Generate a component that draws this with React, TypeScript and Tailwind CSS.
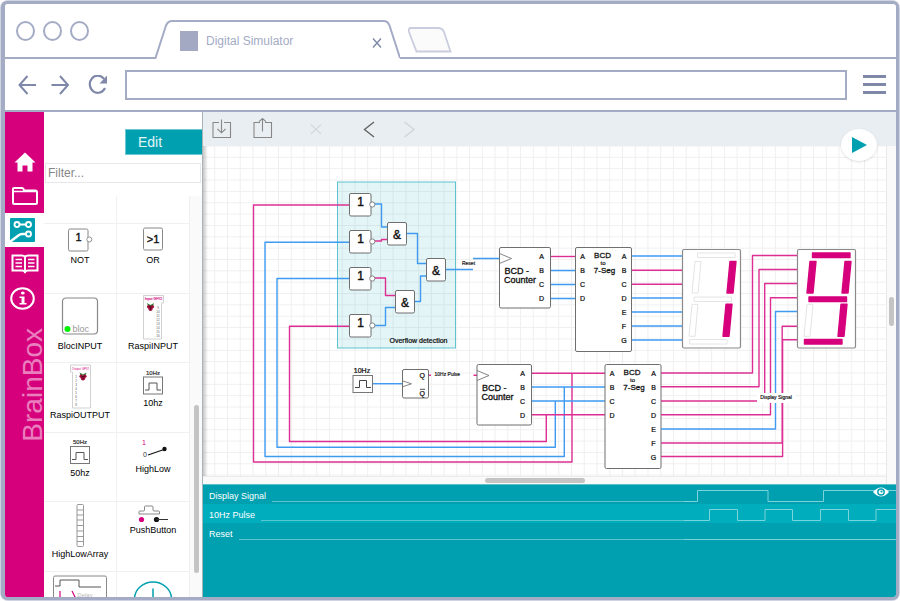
import React from "react";

const PINK = "#d6007d";
const WIRE_PINK = "#dd2f93";
const WIRE_BLUE = "#3f9bf2";
const FONT = '"Liberation Sans", Arial, sans-serif';

type TextProps = {
  x: number;
  y: number;
  size: number;
  anchor?: "start" | "middle";
  bold?: boolean;
  fill?: string;
  children: React.ReactNode;
};

function Label({ x, y, size, anchor = "middle", bold = false, fill = "#111", children }: TextProps) {
  return (
    <text
      x={x}
      y={y + size * 0.36}
      fontSize={size}
      fontFamily={FONT}
      textAnchor={anchor}
      fill={fill}
      stroke={bold ? fill : "none"}
      strokeWidth={bold ? size * 0.035 : 0}
    >
      {children}
    </text>
  );
}

function Box({ x, y, w, h }: { x: number; y: number; w: number; h: number }) {
  return <rect x={x} y={y} width={w} height={h} rx={1.5} fill="#fff" stroke="#6f6f6f" />;
}

const PINS = ["A", "B", "C", "D", "E", "F", "G"];

function Wire({ d, on = false }: { d: string; on?: boolean }) {
  return <path d={d} fill="none" stroke={on ? WIRE_PINK : WIRE_BLUE} strokeWidth={1.4} strokeLinejoin="round" />;
}

function NotGate({ y }: { y: number }) {
  return (
    <g>
      <Box x={349.5} y={y} w={21.5} h={22.5} />
      <circle cx={372.3} cy={y + 11} r={2.6} fill="#fff" stroke="#777" strokeWidth={0.9} />
      <Label x={360.5} y={y + 8.5} size={12} bold>1</Label>
    </g>
  );
}

function AndGate({ x, y }: { x: number; y: number }) {
  return (
    <g>
      <Box x={x} y={y} w={19} h={22.5} />
      <Label x={x + 9.5} y={y + 12} size={12} bold>&amp;</Label>
    </g>
  );
}

function Counter({ x, y, w }: { x: number; y: number; w: number }) {
  return (
    <g>
      <Box x={x} y={y} w={w} h={60.5} />
      <path d={`M${x} ${y + 6}l12 5-12 5`} fill="none" stroke="#777" strokeWidth={0.9} />
      <Label x={x + 5} y={y + 23} size={9} anchor="start" bold>BCD -</Label>
      <Label x={x + 4.5} y={y + 32} size={9} anchor="start" bold>Counter</Label>
      {PINS.slice(0, 4).map((p, i) => (
        <Label key={p} x={x + w - 9} y={y + 9 + i * 14} size={7} bold>{p}</Label>
      ))}
    </g>
  );
}

function Decoder({ x, y }: { x: number; y: number }) {
  return (
    <g>
      <Box x={x} y={y} w={56} h={104} />
      <Label x={x + 27} y={y + 7.5} size={8} bold>BCD</Label>
      <Label x={x + 27.5} y={y + 15} size={6} bold>to</Label>
      <Label x={x + 29} y={y + 22.5} size={8} bold>7-Seg</Label>
      {PINS.slice(0, 4).map((p, i) => (
        <Label key={p} x={x + 7} y={y + 9 + i * 14} size={7} bold>{p}</Label>
      ))}
      {PINS.map((p, i) => (
        <Label key={p} x={x + 48.5} y={y + 9 + i * 14} size={7} bold>{p}</Label>
      ))}
    </g>
  );
}

const SEGMENTS: Record<string, string> = {
  top: "M15 3.500h37.500v4.500h-37.500z",
  upperLeft: "M12.500 12h6l-3 31.500h-6z",
  upperRight: "M47.500 12h6l-3 31.500h-6z",
  middle: "M11.500 47.500h37.500v4.500h-37.500z",
  lowerLeft: "M9.500 54.800h6l-3 32h-6z",
  lowerRight: "M43.500 54.800h6l-3 32h-6z",
  bottom: "M7 90h37.500v4.500h-37.500z",
};

function Display({ x, lit }: { x: number; lit: string[] }) {
  return (
    <g transform={`translate(${x} 249.5)`}>
      <rect width={58} height={98.5} rx={1.5} fill="#fff" stroke="#8a8a8a" strokeWidth={1.2} />
      {Object.keys(SEGMENTS).map((name) => {
        const on = lit.includes(name);
        return (
          <path
            key={name}
            d={SEGMENTS[name]}
            fill={on ? PINK : "#fff"}
            stroke={on ? PINK : "#e4e4e4"}
            strokeWidth={on ? 1.4 : 1}
            strokeLinejoin="round"
          />
        );
      })}
    </g>
  );
}

function Circuit() {
  return (
    <svg className="block h-full w-full" role="img" aria-label="Circuit diagram">
      <defs>
        <pattern id="grid" x={11.3} y={-0.5} width={12.74} height={11.35} patternUnits="userSpaceOnUse">
          <path d="M.5 0V11.35M0 .5H12.74" stroke="#efefef" strokeWidth={1} fill="none" />
        </pattern>
        <linearGradient id="edge">
          <stop offset="0" stopColor="#000" stopOpacity={0.22} />
          <stop offset="1" stopColor="#000" stopOpacity={0} />
        </linearGradient>
      </defs>
      <rect width="100%" height="100%" fill="url(#grid)" />
      <rect width={5} height="100%" fill="url(#edge)" />
      <g transform="translate(-203 -146)">
        <rect x={337.5} y={182} width={118} height={166} fill="#00a0b0" fillOpacity={0.11} stroke="#5dc3cc" />
        <Label x={418.5} y={340} size={7} bold>Overflow detection</Label>

        <Wire on d="M349 205H253.500V462H572V373" />
        <Wire d="M349 242.300H265V456.500H564.300V387" />
        <Wire d="M349 278.500H277V447.300H555.300V401" />
        <Wire on d="M349 326.300H289.500V441.500H546.300V415" />
        <Wire d="M374.500 204H381.500V227H387.500" />
        <Wire on d="M374.500 241H381.500V239.500H387.500" />
        <Wire on d="M374.500 278H385.500V295.500H395" />
        <Wire d="M374.500 325.500H385.500V307.500H395" />
        <Wire d="M407 233.500H417.500V263.500H427" />
        <Wire d="M415 301.500H420.500V276H427" />
        <Wire d="M446 269.500H473M473 258.500H500" />
        <Label x={468.5} y={263} size={5} bold>Reset</Label>

        <NotGate y={193.5} />
        <NotGate y={230.5} />
        <NotGate y={267.5} />
        <NotGate y={314.5} />
        <AndGate x={387.5} y={222.5} />
        <AndGate x={426.5} y={258.5} />
        <AndGate x={395.5} y={290.5} />

        <Wire on d="M550 256.500H576" />
        <Wire d="M550 270.500H576M550 284.500H576M550 298.500H576" />
        <Wire on d="M631 270.300H683M631 284.300H683" />
        <Wire d="M631 256H683M631 298H683M631 312H683M631 326H683M631 340H683" />
        <Counter x={499.5} y={247.5} w={51} />
        <Decoder x={575.5} y={247.5} />
        <Display x={682.5} lit={["upperRight", "lowerRight"]} />

        <Label x={362} y={370.5} size={7} bold>10Hz</Label>
        <Wire d="M372 383.700H403" />
        <rect x={353} y={375.5} width={19.5} height={17} fill="#fff" stroke="#777" />
        <path d="M355 387.500H359.500V380.500H366.500V387.500H371" fill="none" stroke="#444" />
        <Box x={402.5} y={369.5} w={26} h={28.5} />
        <path d="M403 381l8.500 2.800-8.500 2.800" fill="none" stroke="#777" strokeWidth={0.9} />
        <Label x={422.3} y={375.5} size={7} bold>Q</Label>
        <Label x={422.3} y={393} size={7} bold>Q</Label>
        <path d="M420 389.300h5" stroke="#222" strokeWidth={0.8} />
        <Wire on d="M429 375.300h2M473.500 375.300h4" />
        <Label x={447.3} y={374} size={5} bold>10Hz Pulse</Label>

        <Wire on d="M531 373.300H605M531 414.800H605" />
        <Wire d="M531 387H605M531 401H605" />
        <Counter x={477} y={364.5} w={54.5} />
        <Decoder x={605} y={364.5} />

        <Wire on d="M661 373H752.500V255.500H798" />
        <Wire on d="M661 386.700H759V269.500H798" />
        <Wire on d="M661 401H764.700V283.500H798" />
        <Wire on d="M661 414.800H770.500V297.700H798" />
        <Wire d="M661 429H775.500V311.500H798" />
        <Wire on d="M661 443H782.200V326.300H798" />
        <Wire on d="M661 456.500H782.600V339.700H798" />
        <rect x={757} y={393} width={38} height={10} fill="#fff" />
        <Label x={776} y={397.3} size={5} bold>Display Signal</Label>
        <Display x={797.5} lit={["top", "upperLeft", "upperRight", "middle", "lowerRight", "bottom"]} />
      </g>
    </svg>
  );
}

function Raspberry({ x, y }: { x: number; y: number }) {
  return (
    <g transform={`translate(${x} ${y})`}>
      <path d="M-3.500-4l3.500 2 3.500-2-1 3h-5z" fill="#2f7d32" />
      <circle cx={-1.8} cy={-0.2} r={1.8} fill="#a3123f" />
      <circle cx={1.8} cy={-0.2} r={1.8} fill="#a3123f" />
      <circle cx={0} cy={1.8} r={2.2} fill="#a3123f" />
      <path d="M-2 0h4M0-1v4" stroke="#3c0618" strokeWidth={0.6} />
    </g>
  );
}

function Clock({ text, y }: { text: string; y: number }) {
  return (
    <g>
      <Label x={36} y={y} size={6} bold fill="#333">{text}</Label>
      <rect x={26.5} y={y + 4.5} width={19} height={17} fill="#fff" stroke="#777" />
      <path d={`M28 ${y + 17.5}h4v-7h8v7h4`} fill="none" stroke="#555" />
    </g>
  );
}

type Part = { name: string; art: React.ReactNode; size: string };

const PARTS: Part[] = [
  {
    name: "NOT",
    size: "h-7",
    art: (
      <>
        <rect x={24.5} y={5} width={19.5} height={22} rx={1.5} fill="#fff" stroke="#888" />
        <circle cx={45.3} cy={15.5} r={2.5} fill="#fff" stroke="#888" strokeWidth={0.9} />
        <Label x={34.5} y={13} size={11} bold>1</Label>
      </>
    ),
  },
  {
    name: "OR",
    size: "h-7",
    art: (
      <>
        <rect x={26.5} y={4} width={19} height={22} rx={1.5} fill="#fff" stroke="#888" />
        <Label x={36} y={15} size={11} bold>&gt;1</Label>
      </>
    ),
  },
  {
    name: "BlocINPUT",
    size: "h-11",
    art: (
      <>
        <rect x={18.5} y={4} width={35} height={36} rx={3.5} fill="#fff" stroke="#888" strokeWidth={1.2} />
        <circle cx={23.5} cy={35} r={3} fill="#00f000" />
        <Label x={28.5} y={35} size={9} anchor="start" fill="#999">bloc</Label>
      </>
    ),
  },
  {
    name: "RaspiINPUT",
    size: "h-11",
    art: (
      <>
        <path d="M26.500 1.500h20v7.500h-2v36h-18z" fill="#fff" stroke="#ccc" strokeWidth={0.9} />
        <Label x={36.5} y={5} size={3.5} bold fill={PINK}>Input GPIO</Label>
        <Raspberry x={33.5} y={13} />
        {["9", "10", "11", "12", "13", "14", "15", "16"].map((n, i) => (
          <Label key={n} x={41} y={13.5 + i * 4} size={3} fill="#555">{n}</Label>
        ))}
      </>
    ),
  },
  {
    name: "RaspiOUTPUT",
    size: "h-11",
    art: (
      <>
        <path d="M26.500 2h20v43h-18v-36h-2z" fill="#fff" stroke="#ccc" strokeWidth={0.9} />
        <Label x={36.5} y={5.5} size={3} fill={PINK}>Output GPIO</Label>
        <Raspberry x={39} y={13.5} />
        {["1", "2", "3", "4", "5", "6", "7", "8"].map((n, i) => (
          <Label key={n} x={32} y={14 + i * 4} size={3} fill="#555">{n}</Label>
        ))}
      </>
    ),
  },
  { name: "10hz", size: "h-8", art: <Clock text="10Hz" y={9.5} /> },
  { name: "50hz", size: "h-8", art: <Clock text="50Hz" y={9} /> },
  {
    name: "HighLow",
    size: "h-7",
    art: (
      <>
        <Label x={27} y={9.5} size={7} fill={PINK}>1</Label>
        <Label x={28} y={21} size={7} fill="#333">0</Label>
        <path d="M31 22l16-5.500" stroke="#111" strokeWidth={1.2} />
        <circle cx={47.5} cy={16} r={2.2} fill="#111" />
      </>
    ),
  },
  {
    name: "HighLowArray",
    size: "h-11",
    art: (
      <>
        <rect x={33} y={2.5} width={6.5} height={42} rx={1} fill="#fff" stroke="#999" />
        <path d="M33 8h6.500M33 13h6.500M33 18h6.500M33 23.500h6.500M33 29h6.500M33 34.500h6.500M33 39.500h6.500" stroke="#999" />
      </>
    ),
  },
  {
    name: "PushButton",
    size: "h-5",
    art: (
      <>
        <path d="M22 12v-2q0-1 1-1h3.500q1 0 1-1v-3q0-1 1-1h6.500q1 0 1 1v3q0 1 1 1h4.500q1 0 1 1v2z" fill="#fff" stroke="#888" />
        <circle cx={24.5} cy={17.5} r={2.6} fill={PINK} />
        <circle cx={39.5} cy={17.5} r={2.6} fill="#111" />
        <path d="M39 17.500h12" stroke="#333" />
      </>
    ),
  },
  {
    name: "",
    size: "h-11",
    art: (
      <>
        <rect x={9.5} y={4} width={53} height={36} rx={1.5} fill="#fff" stroke="#888" />
        <path d="M11 14h5v-6h19v7h22" fill="none" stroke="#555" />
        <path d="M16 19v9M28 19l4 8" stroke={PINK} strokeWidth={1.2} />
        <Label x={41} y={23} size={6} fill="#bbb">Delay</Label>
      </>
    ),
  },
  {
    name: "",
    size: "h-11",
    art: (
      <>
        <ellipse cx={36} cy={27} rx={18.5} ry={17} fill="#fff" stroke="#00a0b0" strokeWidth={1.5} />
        <path d="M36 16.500v22M26 27h20" stroke="#00a0b0" strokeWidth={1.5} />
      </>
    ),
  },
];

const HIDDEN_NAMES = ["Delay", "Add component"];

function Palette() {
  return (
    <section className="flex w-[158px] shrink-0 flex-col bg-white">
      <div className="flex justify-end pt-[17px]">
        <button type="button" className="h-[26px] w-[77px] border border-[#6cc8d1] border-r-0 bg-[#00a0b0] pl-3 text-left text-sm leading-6 text-[#e2f6f8]">
          Edit
        </button>
      </div>
      <div className="pt-2 pr-px pl-px">
        <input
          type="text"
          aria-label="Filter components"
          placeholder="Filter..."
          className="block h-5 w-full border border-[#e8e8e8] pl-0.5 text-xs text-gray-700 outline-none placeholder:text-[#888]"
        />
      </div>
      <div className="mt-[13px] flex min-h-0 flex-1">
        <div className="grid flex-1 grid-cols-2 grid-rows-[28px_70px_69px_70px_69px_70px_69px] overflow-hidden">
          <div className="border-r border-b border-[#f0f0f0]" />
          <div className="border-r border-b border-[#f0f0f0]" />
          {PARTS.map((part, i) => (
            <button
              key={i}
              type="button"
              aria-label={part.name || HIDDEN_NAMES[i - 10]}
              className="flex flex-col items-center overflow-hidden border-r border-b border-[#f0f0f0] text-[9px] leading-4 text-black"
            >
              <svg className={`w-[72px] shrink-0 overflow-visible ${part.size}`}>{part.art}</svg>
              {part.name}
            </button>
          ))}
        </div>
        <div className="w-3 bg-[#fafafa] pt-[209px] pl-1">
          <div className="h-[168px] w-[5px] rounded-full bg-[#c4c4c4]" />
        </div>
      </div>
    </section>
  );
}

function Sidebar() {
  const item = "flex h-[34px] w-full shrink-0 items-center justify-center";
  return (
    <nav className="flex w-[39px] shrink-0 flex-col overflow-hidden bg-[#d6007d] pt-[33px]">
      <button type="button" aria-label="Home" className={item}>
        <svg width="22" height="20" viewBox="0 0 22 20" fill="#fff">
          <path d="M11 0.500L21.500 10.500H18.500V19.500H13.500V13.500H8.500V19.500H3.500V10.500H.500z" />
        </svg>
      </button>
      <button type="button" aria-label="Open" className={item}>
        <svg width="26" height="18" viewBox="0 0 26 18" fill="none" stroke="#fff" strokeWidth="2" strokeLinejoin="round">
          <path d="M1 4V2q0-1 1-1h8q1 0 1.500 1l.500 1.500h11q2 0 2 1.500v11q0 1-1 1H2q-1 0-1-1z" />
          <path d="M1 4.500h23" strokeWidth="1.500" />
        </svg>
      </button>
      <button type="button" aria-label="Simulator" className="flex h-[34px] w-full shrink-0 items-center bg-white pl-[5px]">
        <svg width="25" height="24" viewBox="0 0 25 24">
          <rect width="25" height="24" rx="1" fill="#00a0b0" />
          <g fill="none" stroke="#fff" strokeWidth="1.900">
            <circle cx="7" cy="6.500" r="2.500" />
            <circle cx="18.500" cy="6.500" r="2.500" />
            <path d="M9.500 6.500h6.500" />
            <circle cx="18.500" cy="16" r="2.500" />
            <path d="M16 16h-3.500q-2.500 0-4.500 1.800l-8 6" strokeWidth="2.500" />
          </g>
        </svg>
      </button>
      <button type="button" aria-label="Manual" className={item}>
        <svg width="28" height="20" viewBox="0 0 28 20" fill="none" stroke="#fff" strokeWidth="2">
          <path d="M14 3q-1-1.500-3-1.500H1.500v15H11q2 0 3 1.500 1-1.500 3-1.500h9.500v-15H17q-2 0-3 1.500zM14 3v16" />
          <path d="M4.500 5.500h6.500M4.500 9h6.500M4.500 12.500h6.500M17 5.500h6.500M17 9h6.500M17 12.500h6.500" strokeWidth="1.700" />
        </svg>
      </button>
      <button type="button" aria-label="About" className="flex h-[34px] w-full shrink-0 items-center pl-[5px]">
        <svg width="25" height="23" viewBox="0 0 25 23">
          <ellipse cx="12.500" cy="11.500" rx="11.300" ry="10.200" fill="none" stroke="#fff" strokeWidth="2" />
          <ellipse cx="12.800" cy="6" rx="1.900" ry="1.600" fill="#fff" />
          <path d="M9.500 9.500h5v6.500h2v1.500h-7V16h2v-5h-2z" fill="#fff" />
        </svg>
      </button>
      <span className="mt-[13px] rotate-180 self-end text-[28px] leading-[22px] text-white/50 [writing-mode:vertical-rl]">
        BrainBox
      </span>
    </nav>
  );
}

function Toolbar() {
  return (
    <div className="flex h-[34px] shrink-0 items-center bg-[#e9eef2] pl-[9px] text-[#888]">
      <button type="button" aria-label="Download">
        <svg width="20" height="22" viewBox="0 0 20 22" fill="none" stroke="currentColor" strokeWidth="1.100">
          <path d="M7 4.500H1v15h17.500v-15H12M9.500 1.500v13M5.500 11l4 3.800 4-3.800" />
        </svg>
      </button>
      <button type="button" aria-label="Share" className="ml-[21px]">
        <svg width="20" height="22" viewBox="0 0 20 22" fill="none" stroke="currentColor" strokeWidth="1.100">
          <path d="M7 4.500H1v15h17.500v-15H12M9.500 13.500V0.500M6 3.700l3.500-3.200L13 3.700" />
        </svg>
      </button>
      <button type="button" aria-label="Delete" className="ml-[37px] text-[#d3d8dc]">
        <svg width="12" height="12" viewBox="0 0 12 12" fill="none" stroke="currentColor" strokeWidth="1.100">
          <path d="M.800 1.500L11 11M11 1.500L.800 11" />
        </svg>
      </button>
      <button type="button" aria-label="Undo" className="ml-[41px] text-[#666]">
        <svg width="12" height="17" viewBox="0 0 12 17" fill="none" stroke="currentColor" strokeWidth="1.400">
          <path d="M11 1L1.500 8.500 11 16" />
        </svg>
      </button>
      <button type="button" aria-label="Redo" className="ml-7 text-[#cfd4d8]">
        <svg width="13" height="17" viewBox="0 0 13 17" fill="none" stroke="currentColor" strokeWidth="1.400">
          <path d="M1.500 1L11 8.500 1.500 16" />
        </svg>
      </button>
    </div>
  );
}

const SIGNALS = [
  { name: "Display Signal", wave: "M0 16.500H13.500V5.500H84V16.500H139.500V5.500H212", row: "" },
  {
    name: "10Hz Pulse",
    wave: "M0 16.500H25.500V5.500H53.500V16.500H81V5.500H108.500V16.500H136.500V5.500H164.500V16.500H192V5.500H212",
    row: "bg-[#00adbd]",
  },
  { name: "Reset", wave: "M0 16.500H212", row: "" },
];

function Timeline() {
  return (
    <section className="relative h-[113px] shrink-0 border-t border-[#5cc0ca] bg-[#00a0b0]">
      {SIGNALS.map((signal) => (
        <div key={signal.name} className={`flex h-[19px] pl-1.5 text-[9px] leading-[22px] text-white ${signal.row}`}>
          <span className="mr-1.5">{signal.name}</span>
          <div className="mb-0.5 flex-1 border-b border-[#5cc4ce]" />
          <svg width="212" height="19" fill="none" stroke="#7bd3db">
            <path d={signal.wave} />
          </svg>
        </div>
      ))}
      <button type="button" aria-label="Toggle signals" className="absolute top-[2px] right-[7px]">
        <svg width="16" height="10" viewBox="0 0 16 10" className="block">
          <path d="M0 5Q8-4 16 5 8 14 0 5z" fill="#fff" />
          <ellipse cx="8" cy="5" rx="3.200" ry="3" fill="none" stroke="#00a0b0" strokeWidth="1.400" />
          <circle cx="8.500" cy="4.500" r="1.100" fill="#00a0b0" />
        </svg>
      </button>
    </section>
  );
}

function TabStrip() {
  return (
    <header className="flex h-[55px] shrink-0">
      <div className="flex w-[150px] gap-2 border-b-2 border-[#a4abc5] pt-[17px] pl-[11px]">
        {["Close", "Minimize", "Zoom"].map((name) => (
          <button
            key={name}
            type="button"
            aria-label={`${name} window`}
            className="h-5 w-[19px] rounded-[50%] border-2 border-[#a4abc5]"
          />
        ))}
      </div>
      <div className="relative w-[245px]">
        <svg width="245" height="55" viewBox="0 0 245 55" className="absolute inset-0" fill="none" stroke="#a4abc5" strokeWidth="2">
          <path d="M-1 54H.500L11 21.500Q13 17 17 17H228.500Q233 17 234.500 21.500L245 54" />
        </svg>
        <div className="relative flex h-full items-center pt-[18px] pl-[25px] text-xs text-[#a4abc5]">
          <span className="mr-2 h-5 w-[18px] bg-[#a3a8c3]" />
          <span>Digital Simulator</span>
          <button type="button" aria-label="Close tab" className="mt-1 mr-[18px] ml-auto">
            <svg width="10" height="10" viewBox="0 0 10 10" stroke="#7f88a8" strokeWidth="1.400">
              <path d="M1 .500l8 9M9 .500l-8 9" />
            </svg>
          </button>
        </div>
      </div>
      <div className="flex-1 border-b-2 border-[#a4abc5] pt-[23px] pl-[7px]">
        <button type="button" aria-label="New tab" className="block">
          <svg width="46" height="26" viewBox="0 0 46 26" fill="#fbfbfc" stroke="#c9cddd" strokeWidth="1.800">
            <path d="M4 1H31Q35.500 1 37 5L43.500 24.500H9.500L2 5Q1 1 4 1z" />
          </svg>
        </button>
      </div>
    </header>
  );
}

function AddressBar() {
  return (
    <div className="flex h-[53px] shrink-0 items-center border-b-2 border-[#a4abc5] pr-2.5 pl-3 text-[#7f88a8]">
      <button type="button" aria-label="Back">
        <svg width="20" height="20" viewBox="0 0 20 20" fill="none" stroke="currentColor" strokeWidth="2">
          <path d="M19 10H2.500M10.500 1l-8 9 8 9" />
        </svg>
      </button>
      <button type="button" aria-label="Forward" className="ml-3.5">
        <svg width="20" height="20" viewBox="0 0 20 20" fill="none" stroke="currentColor" strokeWidth="2">
          <path d="M.500 10H17M9 1l8 9-8 9" />
        </svg>
      </button>
      <button type="button" aria-label="Reload" className="ml-[17px]">
        <svg width="20" height="20" viewBox="0 0 20 20" fill="none" stroke="currentColor" strokeWidth="2.200">
          <path d="M16 3.800A8 8.600 0 1 0 17 13" />
          <path d="M19 .500V8.500H11.500z" fill="currentColor" stroke="none" />
        </svg>
      </button>
      <input
        type="text"
        aria-label="Address"
        className="ml-[17px] h-[30px] min-w-0 flex-1 border-2 border-[#a4abc5] px-2 text-xs outline-none"
      />
      <button type="button" aria-label="Menu" className="ml-4 flex flex-col gap-[5px]">
        <span className="h-[3px] w-[23px] bg-[#7f88a8]" />
        <span className="h-[3px] w-[23px] bg-[#7f88a8]" />
        <span className="h-[3px] w-[23px] bg-[#7f88a8]" />
      </button>
    </div>
  );
}

export default function App() {
  return (
    <div className={'h-screen rounded-lg bg-[#d0d3e1] p-px font-["Liberation_Sans",Arial,sans-serif]'}>
      <div className="flex h-full flex-col overflow-hidden rounded-md border-[3px] border-l-4 border-[#a4abc5] bg-white">
        <TabStrip />
        <AddressBar />
        <div className="flex min-h-0 flex-1">
          <Sidebar />
          <Palette />
          <main className="relative flex min-w-0 flex-1 flex-col border-l border-[#a9b4b8]">
            <Toolbar />
            <div className="flex min-h-0 flex-1">
              <div className="flex min-w-0 flex-1 flex-col">
                <div className="min-h-0 flex-1 overflow-hidden">
                  <Circuit />
                </div>
                <div className="flex h-2 shrink-0 justify-center border-t border-[#ececec] bg-[#fafafa] pt-px">
                  <div className="mr-5 h-[5px] w-[100px] rounded-full bg-[#c4c4c4]" />
                </div>
              </div>
              <div className="flex w-2.5 shrink-0 flex-col items-center border-l border-[#e8e8e8] bg-[#fafafa] pt-[151px]">
                <div className="h-[29px] w-[5px] rounded-full bg-[#c4c4c4]" />
              </div>
            </div>
            <Timeline />
            <button
              type="button"
              aria-label="Run simulation"
              className="absolute top-[17px] right-[19px] flex h-8 w-9 items-center justify-center rounded-[50%] bg-white shadow"
            >
              <svg width="15" height="16" viewBox="0 0 15 16" fill="#00a0b0">
                <path d="M0 0l15 8-15 8z" />
              </svg>
            </button>
          </main>
        </div>
      </div>
    </div>
  );
}
